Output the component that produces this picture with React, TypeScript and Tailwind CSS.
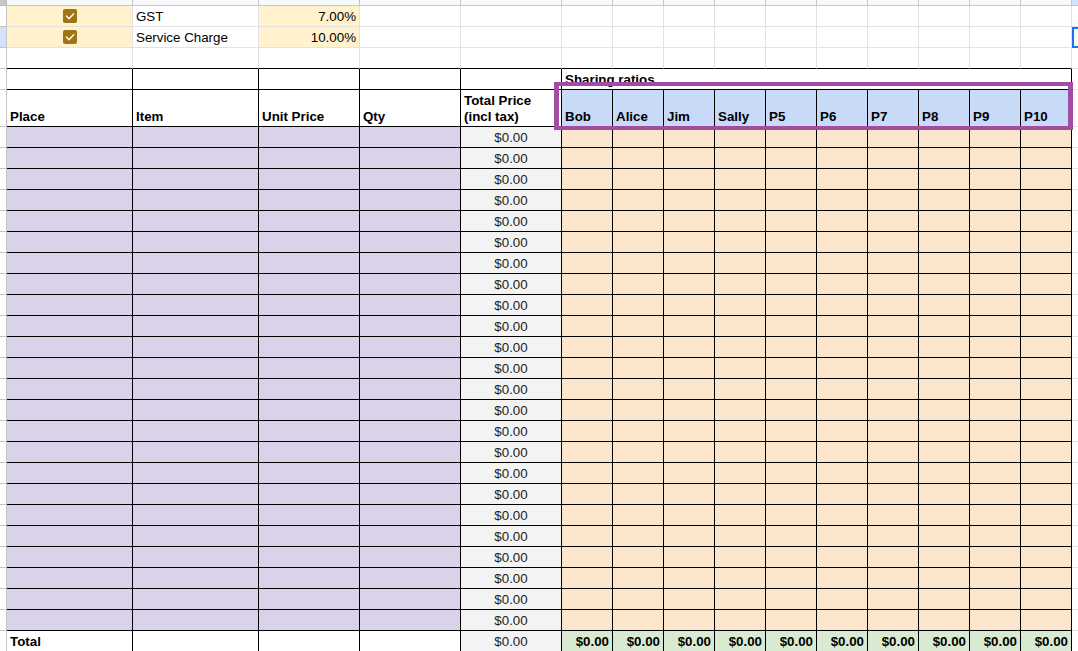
import React from "react";

const NAMES = ["Bob", "Alice", "Jim", "Sally", "P5", "P6", "P7", "P8", "P9", "P10"];
const DATA_ROWS = 24;

function Cell({ className = "", children }: { className?: string; children?: React.ReactNode }) {
  return (
    <div className={`flex items-end overflow-hidden whitespace-nowrap border-r border-b px-[3px] pb-[1px] leading-[16px] ${className}`}>
      {children}
    </div>
  );
}

function RowHead({ selected }: { selected?: boolean }) {
  return <div className={`border-r border-b border-[#c4c7c5] ${selected ? "bg-[#d3e3fd]" : "bg-white"}`} />;
}

function Checkbox() {
  return (
    <svg width="14" height="14" viewBox="0 0 14 14" className="mb-[2px]">
      <rect x="0" y="0" width="14" height="14" rx="2" fill="#9e7511" />
      <path d="M3.4 7.1 L6 9.7 L10.7 4.7" stroke="#fff" strokeWidth="1.4" fill="none" strokeLinecap="round" strokeLinejoin="round" />
    </svg>
  );
}

function TopRow({ label, value, selected }: { label: string; value: string; selected?: boolean }) {
  return (
    <>
      <RowHead selected={selected} />
      <Cell className="justify-center border-[#e2e2e2] bg-[#fff2cc]">
        <Checkbox />
      </Cell>
      <Cell className="border-[#e2e2e2]">{label}</Cell>
      <Cell className="justify-end border-[#e2e2e2] bg-[#fff2cc]">{value}</Cell>
      {Array.from({ length: 12 }).map((_, i) => (
        <Cell key={i} className="border-[#e2e2e2]" />
      ))}
      {selected ? (
        <div className="border-2 border-r-0 border-[#1a73e8] bg-white" />
      ) : (
        <div className="border-b border-[#e2e2e2]" />
      )}
    </>
  );
}

export default function App() {
  return (
    <div className="relative h-[651px] w-[1078px] overflow-hidden bg-white text-[13.33px] text-black" style={{ fontFamily: '"Liberation Sans", Arial, sans-serif' }}>
      <div className="grid grid-cols-[7px_126px_126px_101px_101px_101px_repeat(10,51px)_6px] grid-rows-[6px_21px_21px_21px_21px_37px_repeat(25,21px)]">
        {/* column header strip */}
        <div className="border-r border-b border-[#b8b8b8] bg-[#c6c6c6]" />
        {Array.from({ length: 15 }).map((_, i) => (
          <div key={i} className="border-r border-b border-[#c4c7c5] bg-[#f8f9fa]" />
        ))}
        <div className="border-b border-[#c4c7c5] bg-[#d3e3fd]" />

        <TopRow label="GST" value="7.00%" />
        <TopRow label="Service Charge" value="10.00%" selected />

        {/* empty row above the table */}
        <RowHead />
        {Array.from({ length: 15 }).map((_, i) => (
          <Cell key={i} className="border-r-[#e2e2e2] border-b-black" />
        ))}
        <div className="border-b border-[#e2e2e2]" />

        {/* sharing ratios row */}
        <RowHead />
        {Array.from({ length: 5 }).map((_, i) => (
          <Cell key={i} className="border-black" />
        ))}
        <Cell className="col-span-10 border-black font-bold">Sharing ratios</Cell>
        <div className="border-b border-[#e2e2e2]" />

        {/* header row */}
        <RowHead />
        <Cell className="border-black font-bold">Place</Cell>
        <Cell className="border-black font-bold">Item</Cell>
        <Cell className="border-black font-bold">Unit Price</Cell>
        <Cell className="border-black font-bold">Qty</Cell>
        <Cell className="border-black font-bold">
          <span>
            Total Price
            <br />
            (incl tax)
          </span>
        </Cell>
        {NAMES.map((n) => (
          <Cell key={n} className="border-black bg-[#c9daf8] font-bold">
            {n}
          </Cell>
        ))}
        <div className="border-b border-[#e2e2e2]" />

        {/* data rows */}
        {Array.from({ length: DATA_ROWS }).map((_, r) => (
          <React.Fragment key={r}>
            <RowHead />
            {Array.from({ length: 4 }).map((_, i) => (
              <Cell key={i} className="border-black bg-[#d9d2e9]" />
            ))}
            <Cell className="justify-center border-black bg-[#f3f3f3] text-[#222]">$0.00</Cell>
            {NAMES.map((n) => (
              <Cell key={n} className="border-black bg-[#fce5cd]" />
            ))}
            <div className="border-b border-[#e2e2e2]" />
          </React.Fragment>
        ))}

        {/* total row */}
        <RowHead />
        <Cell className="border-black font-bold">Total</Cell>
        <Cell className="border-black" />
        <Cell className="border-black" />
        <Cell className="border-black" />
        <Cell className="justify-center border-black bg-[#f3f3f3] text-[#222]">$0.00</Cell>
        {NAMES.map((n) => (
          <Cell key={n} className="justify-end border-black bg-[#d9ead3] font-bold">
            $0.00
          </Cell>
        ))}
        <div className="border-b border-[#e2e2e2]" />
      </div>

      {/* highlight rectangle drawn over the names */}
      <div className="pointer-events-none absolute left-[554px] top-[82px] h-[48px] w-[519px] border-[5px] border-t-4 border-b-4 border-[#a24ca4]" />
    </div>
  );
}
